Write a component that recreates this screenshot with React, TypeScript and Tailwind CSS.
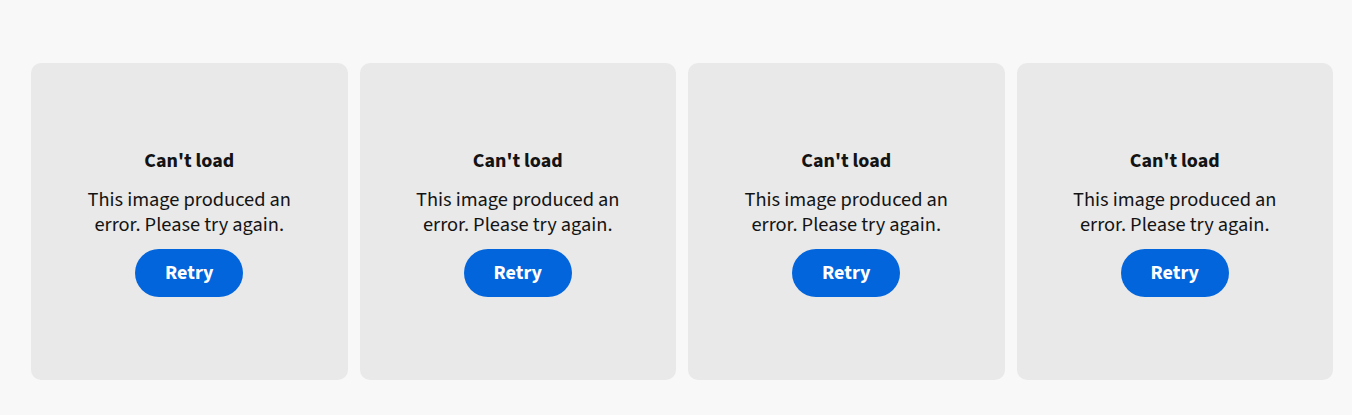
import React from 'react';

function ErrorCard() {
  return (
    <div className="aspect-square rounded-[10px] bg-[#e9e9e9] pt-[3px] flex flex-col items-center justify-center text-center text-[#131313]">
      <h3 className="m-0 text-[20px] font-bold leading-[24px]">Can't load</h3>
      <p className="mt-[14px] mb-0 w-[240px] text-[20.4px] leading-[25px]">
        This image produced an error. Please try again.
      </p>
      <button className="mt-[12px] h-[48px] w-[108px] rounded-full bg-[#0265dc] text-white text-[20px] font-bold">
        Retry
      </button>
    </div>
  );
}

export default function App() {
  return (
    <div
      className="min-h-[415px] bg-[#f8f8f8] pl-[31px] pr-[19px] pt-[63px]"
      style={{ fontFamily: '"Source Sans 3", "Noto Sans", "Open Sans", sans-serif' }}
    >
      <div className="grid grid-cols-4 gap-[12px]">
        {[0, 1, 2, 3].map((i) => (
          <ErrorCard key={i} />
        ))}
      </div>
    </div>
  );
}
